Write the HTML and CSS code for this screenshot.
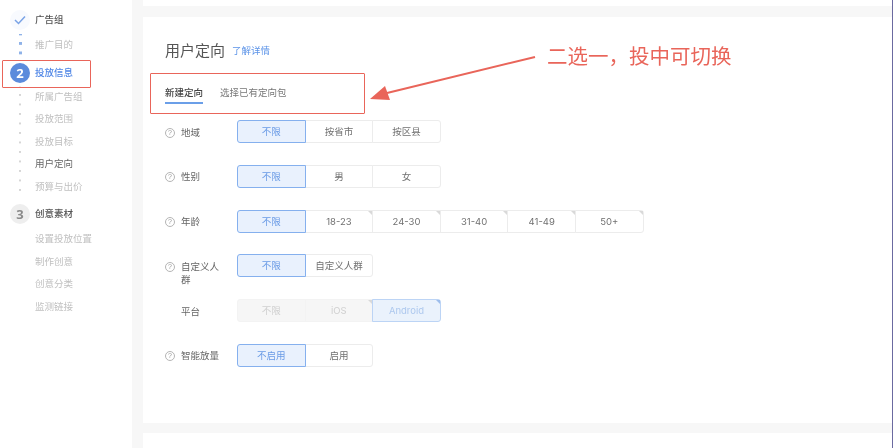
FILE: index.html
```html
<!DOCTYPE html>
<html lang="zh-CN">
<head>
<meta charset="utf-8">
<title>用户定向</title>
<link rel="stylesheet" href="styles.css">
</head>
<body>
<div class="app">
  <nav class="sidebar">
    <div class="step step-first"><span class="badge badge-done"><svg class="check" viewBox="0 0 12 10" width="12" height="10"><path d="M1 5l3.5 3.5L11 1.5" fill="none" stroke="#7aa3e6" stroke-width="1.5"/></svg></span><span class="step-name">广告组</span></div>
    <div class="group rail-blue"><div class="item">推广目的</div></div>
    <div class="step step-active"><span class="badge badge-active">2</span><span class="step-name active-name">投放信息</span></div>
    <div class="group rail-gray">
      <div class="item">所属广告组</div>
      <div class="item">投放范围</div>
      <div class="item">投放目标</div>
      <div class="item item-current">用户定向</div>
      <div class="item">预算与出价</div>
    </div>
    <div class="step step-third"><span class="badge badge-todo">3</span><span class="step-name">创意素材</span></div>
    <div class="group group-last">
      <div class="item">设置投放位置</div>
      <div class="item">制作创意</div>
      <div class="item">创意分类</div>
      <div class="item">监测链接</div>
    </div>
  </nav>
  <main class="main">
    <div class="card card-top"></div>
    <section class="card card-form">
      <header class="head"><h2 class="title">用户定向</h2><a class="more">了解详情</a></header>
      <div class="tabs"><span class="tab tab-on">新建定向</span><span class="tab">选择已有定向包</span></div>
      <div class="form">
        <div class="row">
          <span class="q">?</span><span class="label">地域</span>
          <div class="opts"><span class="opt on">不限</span><span class="opt">按省市</span><span class="opt">按区县</span></div>
        </div>
        <div class="row">
          <span class="q">?</span><span class="label">性别</span>
          <div class="opts"><span class="opt on">不限</span><span class="opt">男</span><span class="opt">女</span></div>
        </div>
        <div class="row">
          <span class="q">?</span><span class="label">年龄</span>
          <div class="opts"><span class="opt on">不限</span><span class="opt tri">18-23</span><span class="opt tri">24-30</span><span class="opt tri">31-40</span><span class="opt tri">41-49</span><span class="opt tri">50+</span></div>
        </div>
        <div class="row">
          <span class="q">?</span><span class="label">自定义人群</span>
          <div class="opts"><span class="opt on">不限</span><span class="opt">自定义人群</span></div>
        </div>
        <div class="row">
          <span class="q-empty"></span><span class="label">平台</span>
          <div class="opts opts-off"><span class="opt off">不限</span><span class="opt off tri">iOS</span><span class="opt off-on tri tri-blue">Android</span></div>
        </div>
        <div class="row">
          <span class="q">?</span><span class="label">智能放量</span>
          <div class="opts"><span class="opt on">不启用</span><span class="opt">启用</span></div>
        </div>
      </div>
    </section>
    <div class="card card-bottom"></div>
  </main>
</div>
<div class="mark mark-step"></div>
<div class="mark mark-tabs"></div>
<svg class="arrow" width="180" height="60" viewBox="0 0 180 60"><path d="M170 2L22 38" stroke="#e9655a" stroke-width="2" fill="none"/><path d="M5 44L20 31L25 45Z" fill="#e9655a"/></svg>
<div class="note">二选一，投中可切换</div>
<div class="edge"></div>
</body>
</html>
```
FILE: styles.css
```css
* { box-sizing: border-box; }
html, body { margin: 0; height: 100%; overflow: hidden; background: #fff; }
body { font-family: "Inter", "Noto Sans CJK SC", "Noto Sans", sans-serif; color: #555; }

.app { display: flex; width: 893px; height: 448px; filter: blur(0.6px); }

/* sidebar */
.sidebar { width: 132px; flex: none; padding: 8.5px 0 0 10px; background: #fff; }
.step { display: flex; align-items: center; gap: 5px; height: 22px; font-size: 9.5px; line-height: 22px; }
.step-active { margin-top: 5.5px; }
.step-third { margin-top: 4.5px; }
.step-name { color: #555; font-weight: 500; }
.active-name { color: #4f86e6; }
.badge { width: 20px; height: 20px; flex: none; border-radius: 50%; display: flex; align-items: center; justify-content: center; font-family: "Open Sans", sans-serif; font-weight: 700; font-size: 13px; }
.badge-done { background: #f8fafe; }
.badge-active { background: #5b8bdc; color: #fff; }
.badge-todo { background: #eeeeee; color: #8a8a8a; }
.group { margin-left: -10px; padding-left: 35px; margin-top: 3px; }
.rail-blue { height: 22.5px; background: linear-gradient(#8fb2e8 2.5px, transparent 2.5px) 19px 8px / 2.5px 9.5px repeat-y; }
.rail-gray { margin-top: 2px; background: linear-gradient(#d6d6d6 2px, transparent 2px) 19px 8px / 1.5px 9.5px repeat-y; }
.group-last { margin-top: 3px; }
.item { height: 22.6px; font-size: 9.5px; line-height: 22.6px; color: #c0c0c0; white-space: nowrap; }
.item-current { color: #666; }

/* main */
.main { flex: 1; display: flex; flex-direction: column; gap: 10.5px; background: #f7f7f7; padding-left: 11px; padding-right: 1px; }
.card { background: #fff; }
.card-top { height: 6px; }
.card-form { height: 406px; padding: 23px 0 0 22px; }
.card-bottom { flex: 1; }

.head { display: flex; align-items: center; gap: 7px; height: 22px; }
.title { margin: 0; font-size: 15px; line-height: 22px; font-weight: 400; color: #555; }
.more { font-size: 9.5px; color: #5b93e8; line-height: 14px; }

.tabs { display: flex; gap: 17px; margin-top: 20px; height: 22px; }
.tab { font-size: 9.5px; line-height: 21px; height: 22px; color: #777; }
.tab-on { color: #444; font-weight: 500; border-bottom: 2px solid #6b9fe8; }

.form { display: flex; flex-direction: column; gap: 21.8px; margin-top: 16.5px; }
.row { display: grid; grid-template-columns: 10px 50px auto; column-gap: 6px; height: 23px; align-items: start; justify-content: start; }
.q { width: 10px; height: 10px; margin-top: 7.5px; border: 1px solid #b5b5b5; border-radius: 50%; font: 7px/8px "Liberation Sans", sans-serif; color: #999; text-align: center; }
.q-empty { width: 10px; }
.label { font-size: 9.5px; line-height: 13px; color: #666; max-width: 40px; padding-top: 5.5px; }

.opts { display: flex; }
.opt { position: relative; width: 68.6px; height: 23px; margin-left: -1px; border: 1px solid #ececec; background: #fff; font-size: 9.5px; line-height: 22.5px; text-align: center; color: #707070; }
.opt:first-child { margin-left: 0; border-radius: 3px 0 0 3px; }
.opt:last-child { border-radius: 0 3px 3px 0; }
.opt.on { z-index: 1; background: #e9f1fd; border-color: #85b0ee; color: #6a9be6; border-radius: 3px 0 0 3px; }
.opts-off .opt { border-color: #f3f3f3; }
.opt.off { background: #f6f6f6; color: #d0d0d0; }
.opt.off-on { z-index: 1; background: #eaf2fc; border-color: #bcd4f5; color: #adc8ee; }
.tri::after { content: ""; position: absolute; top: 0; right: 0; width: 0; height: 0; border-style: solid; border-width: 0 4px 4px 0; border-color: transparent #d9d9d9 transparent transparent; }
.tri-blue::after { border-color: transparent #9dbdec transparent transparent; }

/* annotation layer */
.mark { position: absolute; border: 1.5px solid #e9655a; border-radius: 1px; filter: blur(0.4px); }
.mark-step { left: 2px; top: 60px; width: 89px; height: 28px; }
.mark-tabs { left: 150px; top: 73px; width: 215px; height: 41px; }
.arrow { position: absolute; left: 365px; top: 55px; filter: blur(0.4px); }
.note { position: absolute; left: 547px; top: 42px; font-size: 20.5px; line-height: 30px; color: #e9655a; white-space: nowrap; filter: blur(0.4px); }
.edge { position: absolute; top: 0; left: 892px; width: 1px; height: 448px; background: #6b6aa0; }
```
